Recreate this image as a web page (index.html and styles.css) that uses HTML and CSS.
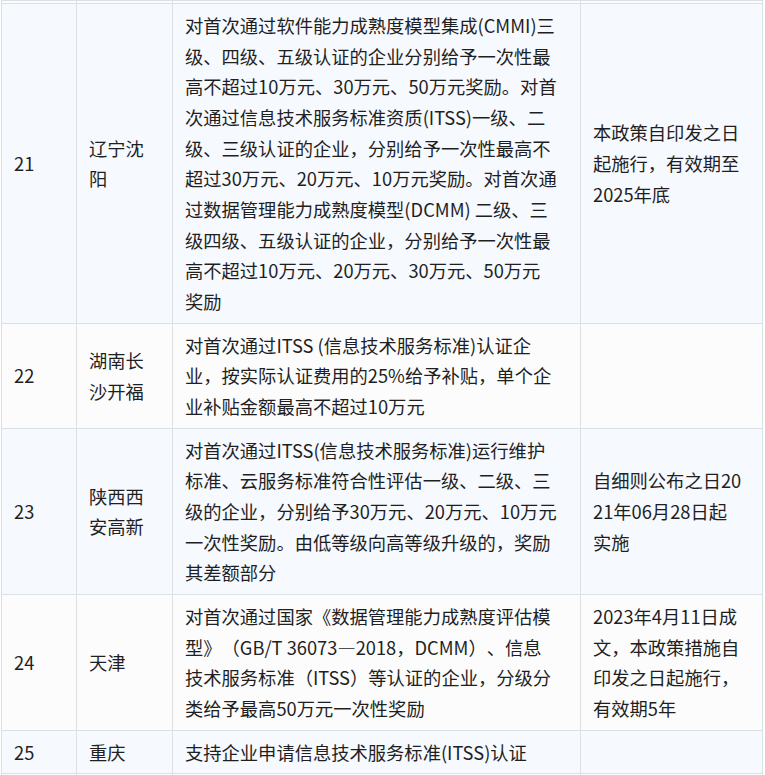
FILE: index.html
```html
<!DOCTYPE html>
<html lang="zh-CN">
<head>
<meta charset="utf-8">
<title>政策表</title>
<link rel="stylesheet" href="styles.css">
</head>
<body>
<div class="wrap">
<table class="policy">
  <colgroup>
    <col class="c-no"><col class="c-area"><col class="c-text"><col class="c-date">
  </colgroup>
  <tbody>
    <tr class="row-even stub"><td></td><td></td><td></td><td></td></tr>
    <tr class="row-odd">
      <td class="mid">21</td>
      <td class="mid">辽宁沈阳</td>
      <td>对首次通过软件能力成熟度模型集成(CMMI)三<br>级、四级、五级认证的企业分别给予一次性最<br>高不超过10万元、30万元、50万元奖励。对首<br>次通过信息技术服务标准资质(ITSS)一级、二<br>级、三级认证的企业，分别给予一次性最高不<br>超过30万元、20万元、10万元奖励。对首次通<br>过数据管理能力成熟度模型(DCMM) 二级、三<br>级四级、五级认证的企业，分别给予一次性最<br>高不超过10万元、20万元、30万元、50万元<br>奖励</td>
      <td class="mid">本政策自印发之日<br>起施行，有效期至<br>2025年底</td>
    </tr>
    <tr class="row-even">
      <td class="mid">22</td>
      <td class="mid">湖南长沙开福</td>
      <td>对首次通过ITSS (信息技术服务标准)认证企<br>业，按实际认证费用的25%给予补贴，单个企<br>业补贴金额最高不超过10万元</td>
      <td class="mid"></td>
    </tr>
    <tr class="row-odd">
      <td class="mid">23</td>
      <td class="mid">陕西西安高新</td>
      <td>对首次通过ITSS(信息技术服务标准)运行维护<br>标准、云服务标准符合性评估一级、二级、三<br>级的企业，分别给予30万元、20万元、10万元<br>一次性奖励。由低等级向高等级升级的，奖励<br>其差额部分</td>
      <td class="mid">自细则公布之日20<br>21年06月28日起<br>实施</td>
    </tr>
    <tr class="row-even">
      <td class="mid">24</td>
      <td class="mid">天津</td>
      <td>对首次通过国家《数据管理能力成熟度评估模<br>型》（GB/T 36073—2018，DCMM）、信息<br>技术服务标准（ITSS）等认证的企业，分级分<br>类给予最高50万元一次性奖励</td>
      <td class="mid">2023年4月11日成<br>文，本政策措施自<br>印发之日起施行，<br>有效期5年</td>
    </tr>
    <tr class="row-odd">
      <td class="mid">25</td>
      <td class="mid">重庆</td>
      <td>支持企业申请信息技术服务标准(ITSS)认证</td>
      <td class="mid"></td>
    </tr>
    <tr class="row-even stub"><td></td><td></td><td></td><td></td></tr>
  </tbody>
</table>
</div>
</body>
</html>
```
FILE: styles.css
```css
html, body {
  margin: 0;
  padding: 0;
  background: #ffffff;
}
.wrap {
  padding-left: 1px;
  height: 775px;
  overflow: hidden;
}
.policy {
  border-collapse: collapse;
  table-layout: fixed;
  width: 761px;
  font-family: "Noto Sans CJK SC", "Noto Sans", sans-serif;
  font-size: 18.3px;
  line-height: 30.67px;
  color: #1f1f1f;
  text-spacing-trim: space-all;
}
.c-no { width: 75px; }
.c-area { width: 96px; }
.c-text { width: 408px; }
.c-date { width: 182px; }
.policy td {
  border: 1px solid #dcdfe4;
  padding: 6px 11px 6px 12px;
  vertical-align: top;
  white-space: normal;
  word-break: break-all;
}
.policy td.mid {
  vertical-align: middle;
}
.row-odd td { background: #f6f9fe; }
.row-even td { background: #fcfcfd; }
.policy tr.stub td {
  height: 2px;
  padding: 0;
  line-height: 0;
}
```
